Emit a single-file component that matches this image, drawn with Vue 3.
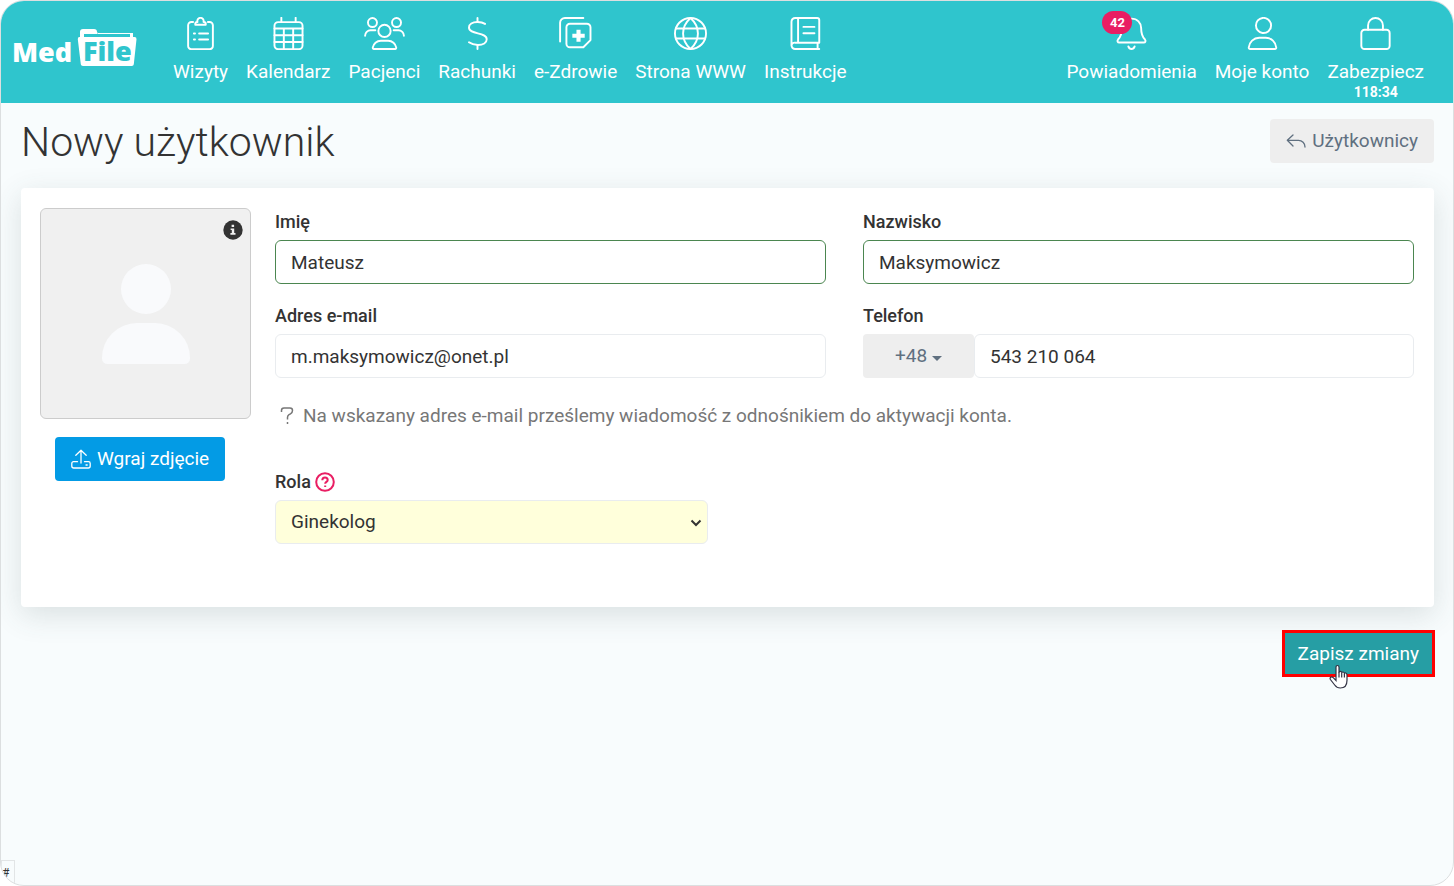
<script setup>
import { ref } from 'vue'

const mainNav = [
  { id: 'visits', label: 'Wizyty' },
  { id: 'calendar', label: 'Kalendarz' },
  { id: 'patients', label: 'Pacjenci' },
  { id: 'bills', label: 'Rachunki' },
  { id: 'ehealth', label: 'e-Zdrowie' },
  { id: 'web', label: 'Strona WWW' },
  { id: 'guides', label: 'Instrukcje' },
]
const userNav = [
  { id: 'alerts', label: 'Powiadomienia', badge: '42' },
  { id: 'account', label: 'Moje konto' },
  { id: 'lock', label: 'Zabezpiecz', timer: '118:34' },
]

// Stroke outlines on a 24-unit grid
const icons = {
  visits: [
    'M6.600 3.600H5.400A2.400 2.400 0 0 0 3 6v15a2.400 2.400 0 0 0 2.400 2.400h13.200A2.400 2.400 0 0 0 21 21V6a2.400 2.400 0 0 0-2.400-2.400h-1.200',
    'M8.200 5.600V4.900a1.300 1.300 0 0 1 1.300-1.300h.3a2.300 2.300 0 1 1 4.400 0h.3a1.300 1.300 0 0 1 1.300 1.300v.7z',
    'M7.200 12h.8M7.200 16.400h.8M11 12h6.500M11 16.400h6.500',
  ],
  calendar: [
    'M4.400 3.700h15.200A2.600 2.600 0 0 1 22.200 6.300v14.500a2.600 2.600 0 0 1-2.600 2.600H4.400a2.600 2.600 0 0 1-2.600-2.600V6.300a2.600 2.600 0 0 1 2.600-2.600z',
    'M6.800.6v3M17.200.6v3M1.800 8.400h20.400M1.800 13.300h20.400M1.800 18.200h20.400M8.600 8.400v15M15.400 8.400v15',
  ],
  patients: [
    'M6.200 7.300a3.300 3.300 0 1 1 0-6.600 3.300 3.300 0 0 1 0 6.600M23.800 7.300a3.300 3.300 0 1 1 0-6.600 3.300 3.300 0 0 1 0 6.600',
    'M15 14.600a4.500 4.500 0 1 0 0-9 4.500 4.500 0 0 0 0 9z',
    'M7.200 23.300h15.600a.8.8 0 0 0 .8-.9 6 6 0 0 0-5.900-5.100h-5.400a6 6 0 0 0-5.900 5.100.8.8 0 0 0 .8.900z',
    'M.8 13.600a4 4 0 0 1 4-4h3.500M29.200 13.600a4 4 0 0 0-4-4h-3.500',
  ],
  bills: [
    'M12 .7v3M12 20.300v3',
    'M17.500 5C16 4 14.300 3.600 12 3.600 8.200 3.600 5.800 5.200 5.800 7.600c0 5.200 12.900 3.400 12.900 8.500 0 2.600-2.600 4.200-6.400 4.200-2.500 0-4.700-.6-6.500-1.900',
  ],
  ehealth: [
    'M.8 17.800V4.200A3.500 3.500 0 0 1 4.300.7h13.400',
    'M8 4.900h12.300a2.600 2.600 0 0 1 2.600 2.600v9.300L17.700 22H8a2.600 2.600 0 0 1-2.600-2.600V7.500A2.600 2.600 0 0 1 8 4.900z',
  ],
  web: [
    'M12 .7a11.300 11.300 0 1 0 0 22.600A11.300 11.300 0 0 0 12 .7z',
    'M12 .7C8.300 4 6.600 8 6.600 12s1.700 8 5.400 11.300C15.700 20 17.400 16 17.400 12S15.700 4 12 .7z',
    'M1.400 8.400h21.200M1.400 15.600h21.200',
  ],
  guides: [
    'M22 23.300H4.500a2.700 2.700 0 0 1-2.700-2.700V3.400A2.700 2.700 0 0 1 4.500.7h16a1.500 1.500 0 0 1 1.500 1.500v16.500H4.500a2.300 2.300 0 0 0-2.700 2.200M6.600.7v18M20.800 18.700v4.600M10.500 7.200h8M10.500 11.800h8',
  ],
  alerts: [
    'M12 1.200c-4.200 0-7 3-7 6.800 0 4.500-1.200 6.800-2.800 8.400-.8.900-.3 2.200.9 2.200h17.800c1.200 0 1.700-1.300.9-2.200C20.200 14.800 19 12.500 19 8c0-3.800-2.800-6.800-7-6.800z',
    'M9.700 21.400c.4 1.200 1.200 1.900 2.300 1.900s1.900-.7 2.300-1.900',
  ],
  account: [
    'M12 11.600A5.500 5.500 0 1 0 12 .7a5.500 5.500 0 0 0 0 10.900z',
    'M3 23.300h18a1 1 0 0 0 1-1.100 7.700 7.700 0 0 0-7.600-7.100H9.600A7.700 7.700 0 0 0 2 22.200a1 1 0 0 0 1 1.100z',
  ],
  lock: [
    'M4 9.300h16a2.300 2.300 0 0 1 2.300 2.300V21a2.300 2.300 0 0 1-2.300 2.300H4A2.300 2.300 0 0 1 1.700 21v-9.400A2.300 2.300 0 0 1 4 9.300z',
    'M6.600 9.300V6.100a5.400 5.400 0 0 1 10.800 0v3.200',
  ],
}

const firstName = ref('Mateusz')
const lastName = ref('Maksymowicz')
const email = ref('m.maksymowicz@onet.pl')
const phone = ref('543 210 064')
const role = ref('Ginekolog')
</script>

<template>
  <div class="window">
    <header class="topbar">
      <a class="logo" href="#" aria-label="MedFile">
        <svg width="127" height="48" viewBox="0 0 127 48">
          <text x="0" y="37" class="logo-med">Med</text>
          <path class="logo-back" d="M70 13V8.500q0-1.500 1.500-1.500H84l2 1.500h33q1.500 0 1.500 1.500v4" />
          <path class="logo-tab" d="M68 7q0-3 3-3h11q3 0 3 3v2H72v6h-4zM118 8h3v7h-3z" />
          <path class="logo-front" d="M67.500 12h55q2.200 0 2 2.200l-2.700 25q-.2 1.800-2 1.800H71q-2 0-2.200-1.800l-3-25q-.2-2.200 1.700-2.200z" />
          <text x="71" y="36" class="logo-file">File</text>
        </svg>
      </a>
      <nav class="nav">
        <a v-for="item in mainNav" :key="item.id" class="nav-item" href="#">
          <svg class="nav-icon" :class="{ wide: item.id === 'patients' }" :viewBox="item.id === 'patients' ? '0 0 30 24' : '0 0 24 24'">
            <path v-for="d in icons[item.id]" :key="d" :d="d" />
            <path v-if="item.id === 'ehealth'" class="solid" d="M12.700 9.200h3v2.900h3v3h-3V18h-3v-2.900h-3v-3h3z" />
          </svg>
          <span>{{ item.label }}</span>
        </a>
      </nav>
      <nav class="nav nav-user">
        <a v-for="item in userNav" :key="item.id" class="nav-item" href="#">
          <svg class="nav-icon" viewBox="0 0 24 24">
            <path v-for="d in icons[item.id]" :key="d" :d="d" />
          </svg>
          <span v-if="item.badge" class="badge">{{ item.badge }}</span>
          <span>{{ item.label }}</span>
          <strong v-if="item.timer" class="timer">{{ item.timer }}</strong>
        </a>
      </nav>
    </header>

    <main class="page">
      <div class="page-head">
        <h1>Nowy użytkownik</h1>
        <button type="button" class="btn btn-grey">
          <svg width="20" height="20" viewBox="0 0 20 20"><path d="M7 4 1.300 9.300 7 15M1.500 9.300h10.800a6.500 6.500 0 0 1 6.700 6.700" /></svg>
          <span>Użytkownicy</span>
        </button>
      </div>

      <form id="user-form" class="card" @submit.prevent>
        <div class="photo">
          <div class="avatar">
            <svg class="person" width="88" height="100" viewBox="0 0 88 100">
              <circle cx="44" cy="25" r="25" />
              <path d="M35 59h18a35 35 0 0 1 35 35q0 6-6 6H6q-6 0-6-6a35 35 0 0 1 35-35z" />
            </svg>
            <svg class="info" width="20" height="20" viewBox="0 0 20 20">
              <circle cx="10" cy="10" r="9.700" />
              <path d="M8.600 4.800h2.500v2.300H8.600zM7.600 8.400h3.600v4.700h1.300v1.700H7.400v-1.700h1.400v-3H7.600z" />
            </svg>
          </div>
          <button type="button" class="btn btn-blue">
            <svg width="20" height="20" viewBox="0 0 20 20">
              <path d="M10 14V1.500M4.800 6.200 10 1.300l5.200 4.900M6.500 12.700h-4a1.700 1.700 0 0 0-1.700 1.700V17a2 2 0 0 0 2 2h14.400a2 2 0 0 0 2-2v-2.600a1.700 1.700 0 0 0-1.700-1.700h-4M15 16h1.200" />
            </svg>
            <span>Wgraj zdjęcie</span>
          </button>
        </div>

        <div class="fields">
          <div class="field">
            <label for="first-name">Imię</label>
            <input id="first-name" v-model="firstName" class="control valid" type="text" />
          </div>
          <div class="field">
            <label for="last-name">Nazwisko</label>
            <input id="last-name" v-model="lastName" class="control valid" type="text" />
          </div>
          <div class="field">
            <label for="email">Adres e-mail</label>
            <input id="email" v-model="email" class="control" type="email" />
          </div>
          <div class="field">
            <label for="phone">Telefon</label>
            <div class="phone">
              <button type="button" class="btn btn-grey prefix">+48<i class="caret"></i></button>
              <input id="phone" v-model="phone" class="control" type="tel" />
            </div>
          </div>
          <p class="hint">
            <svg width="14" height="20" viewBox="0 0 14 20"><path d="M1.500 6V4.500Q1.500 2 4 2h6q2.500 0 2.500 2.500 0 2.200-2 3.300L9 8.700Q7.500 9.600 7.500 11.500v2M7.500 16v2" /></svg>
            <span>Na wskazany adres e-mail prześlemy wiadomość z odnośnikiem do aktywacji konta.</span>
          </p>
          <div class="field role">
            <label for="role">Rola
              <svg width="20" height="20" viewBox="0 0 20 20">
                <circle cx="10" cy="10" r="8.800" />
                <path d="M7.300 8.300C7.300 6.500 8.500 5.500 10 5.500s2.700 1 2.700 2.500c0 1.900-2.500 1.900-2.500 3.700M10.200 13.400v1.700" />
              </svg>
            </label>
            <div class="select">
              <select id="role" v-model="role" class="control"><option>Ginekolog</option></select>
              <svg width="12" height="8" viewBox="0 0 12 8"><path d="M1.500 1.500 6 6l4.500-4.500" /></svg>
            </div>
          </div>
        </div>
      </form>

      <div class="actions">
        <button type="submit" form="user-form" class="btn btn-save">Zapisz zmiany</button>
        <svg class="pointer" width="20" height="26" viewBox="0 0 20 26">
          <path d="M7 14.500V3.200q0-1.700 1.500-1.700T10 3.200v5.300q.2-1.200 1.400-1.100 1.200.1 1.300 1.400.3-.9 1.400-.8 1.100.2 1.300 1.500.4-.8 1.400-.5 1.200.3 1.200 1.900v5.300q0 7.800-6.700 7.800-3.500 0-5.600-3L1.400 15.500q-.8-1.500.4-2.300 1.200-.7 2.400.5L7 16.500z" />
          <path class="lines" d="M10 8v5.500M12.700 9v4.500M15.400 10v3.500" />
        </svg>
      </div>
    </main>
    <div class="corner">#</div>
  </div>
</template>

<style>
body {
  background: #fff;
}
</style>

<style scoped>
* {
  box-sizing: border-box;
}
.window {
  position: relative;
  display: flex;
  flex-direction: column;
  min-height: 100vh;
  overflow: hidden;
  border: 1px solid #dcdfe0;
  border-radius: 24px;
  background: #f8fcfd;
  color: #333;
  font: 19px/24px Roboto, sans-serif;
}
.topbar {
  display: flex;
  align-items: flex-start;
  height: 102px;
  padding: 16px 20px 0 11px;
  background: #2fc5cd;
}
.logo {
  margin: 8px 25px 0 0;
}
.logo svg {
  display: block;
}
.logo text {
  font-family: "Open Sans", sans-serif;
  font-weight: 800;
  font-size: 27px;
}
.logo-med {
  fill: #fff;
}
.logo .logo-file {
  fill: #2fc5cd;
}
.logo-back {
  fill: none;
  stroke: #fff;
  stroke-width: 1;
}
.logo-tab,
.logo-front {
  fill: #fff;
}
.nav {
  display: flex;
}
.nav-user {
  margin-left: auto;
}
.nav-item {
  position: relative;
  display: flex;
  flex-direction: column;
  align-items: center;
  padding: 0 9px;
  color: #fff;
  text-decoration: none;
  white-space: nowrap;
}
.nav-icon {
  width: 33px;
  height: 33px;
  margin-bottom: 10px;
  fill: none;
  stroke: #fff;
  stroke-width: 1.4;
  stroke-linecap: round;
  stroke-linejoin: round;
}
.nav-icon.wide {
  width: 41px;
}
.nav-icon .solid {
  fill: #fff;
  stroke: none;
}
.timer {
  margin-top: -1px;
  font-size: 14px;
  line-height: 18px;
}
.badge {
  position: absolute;
  top: -6px;
  left: 45px;
  width: 30px;
  height: 23px;
  border-radius: 12px;
  background: #e91e63;
  font-size: 13px;
  font-weight: 700;
  line-height: 23px;
  text-align: center;
}
.page {
  padding: 16px 19px 0 20px;
}
.page-head {
  display: flex;
  justify-content: space-between;
  margin-bottom: 23px;
}
h1 {
  margin: 0;
  font-size: 41px;
  font-weight: 300;
  line-height: 46px;
}
.btn {
  display: inline-flex;
  align-items: center;
  justify-content: center;
  height: 44px;
  padding: 0 16px;
  border: 0;
  border-radius: 4px;
  font: inherit;
  white-space: nowrap;
}
.btn svg {
  margin-right: 6px;
  fill: none;
  stroke: currentColor;
  stroke-width: 1.3;
  stroke-linecap: round;
  stroke-linejoin: round;
}
.btn-grey {
  background: #eee;
  color: #607080;
}
.btn-blue {
  margin: 18px 0 0 15px;
  background: #039be5;
  color: #fff;
}
.card {
  display: flex;
  gap: 24px;
  min-height: 419px;
  padding: 20px 20px 20px 19px;
  border-radius: 4px;
  background: #fff;
  box-shadow: 0 8px 30px rgba(60, 80, 80, 0.16);
}
.photo {
  flex: none;
}
.avatar {
  position: relative;
  display: flex;
  justify-content: center;
  width: 211px;
  height: 211px;
  padding-top: 55px;
  border: 1px solid #ccc;
  border-radius: 6px;
  background: #f0f0f0;
}
.person {
  fill: #f9fafc;
}
.info {
  position: absolute;
  top: 11px;
  right: 7px;
  fill: #333;
}
.info path {
  fill: #f0f0f0;
}
.fields {
  flex: 1;
  display: grid;
  grid-template-columns: 1fr 1fr;
  align-content: start;
  column-gap: 37px;
  row-gap: 18px;
}
.field label {
  display: flex;
  align-items: center;
  gap: 4px;
  height: 28px;
  margin-bottom: 4px;
  font-size: 18px;
  font-weight: 500;
}
.field label svg {
  fill: none;
  stroke: #e91e63;
  stroke-width: 2;
}
.control {
  display: block;
  width: 100%;
  height: 44px;
  padding: 0 15px;
  border: 1px solid #e9ecef;
  border-radius: 6px;
  background: #fff;
  color: #333;
  font: inherit;
  outline: 0;
}
.control.valid {
  border-color: #4b8650;
}
.phone {
  display: flex;
}
.phone .control {
  flex: 1;
  min-width: 0;
}
.prefix {
  flex: none;
  width: 111px;
}
.caret {
  margin: 4px 0 0 5px;
  border: 5px solid transparent;
  border-top-color: currentColor;
  border-bottom: 0;
}
.hint {
  grid-column: 1 / -1;
  display: flex;
  align-items: center;
  gap: 9px;
  margin: 8px 0 22px;
  padding-left: 5px;
  color: #777;
}
.hint svg {
  fill: none;
  stroke: currentColor;
  stroke-width: 1.5;
}
.role {
  max-width: 433px;
}
.select {
  position: relative;
}
.select .control {
  appearance: none;
  background: #ffffdb;
}
.select svg {
  position: absolute;
  top: 19px;
  right: 6px;
  fill: none;
  stroke: #333;
  stroke-width: 2;
  pointer-events: none;
}
.actions {
  position: relative;
  display: flex;
  justify-content: flex-end;
  margin: 23px -1px 0 0;
}
.btn-save {
  height: 47px;
  padding: 0 13px;
  border: 3px solid #f00;
  border-radius: 0;
  background: #269ea4;
  color: #fff;
}
.pointer {
  position: absolute;
  top: 34px;
  right: 86px;
  fill: #fff;
  stroke: #334;
  stroke-width: 1.2;
}
.pointer .lines {
  fill: none;
}
.corner {
  position: absolute;
  bottom: 0;
  left: 0;
  width: 14px;
  height: 25px;
  border: 1px solid #e2e5e6;
  font-size: 12px;
}
</style>
